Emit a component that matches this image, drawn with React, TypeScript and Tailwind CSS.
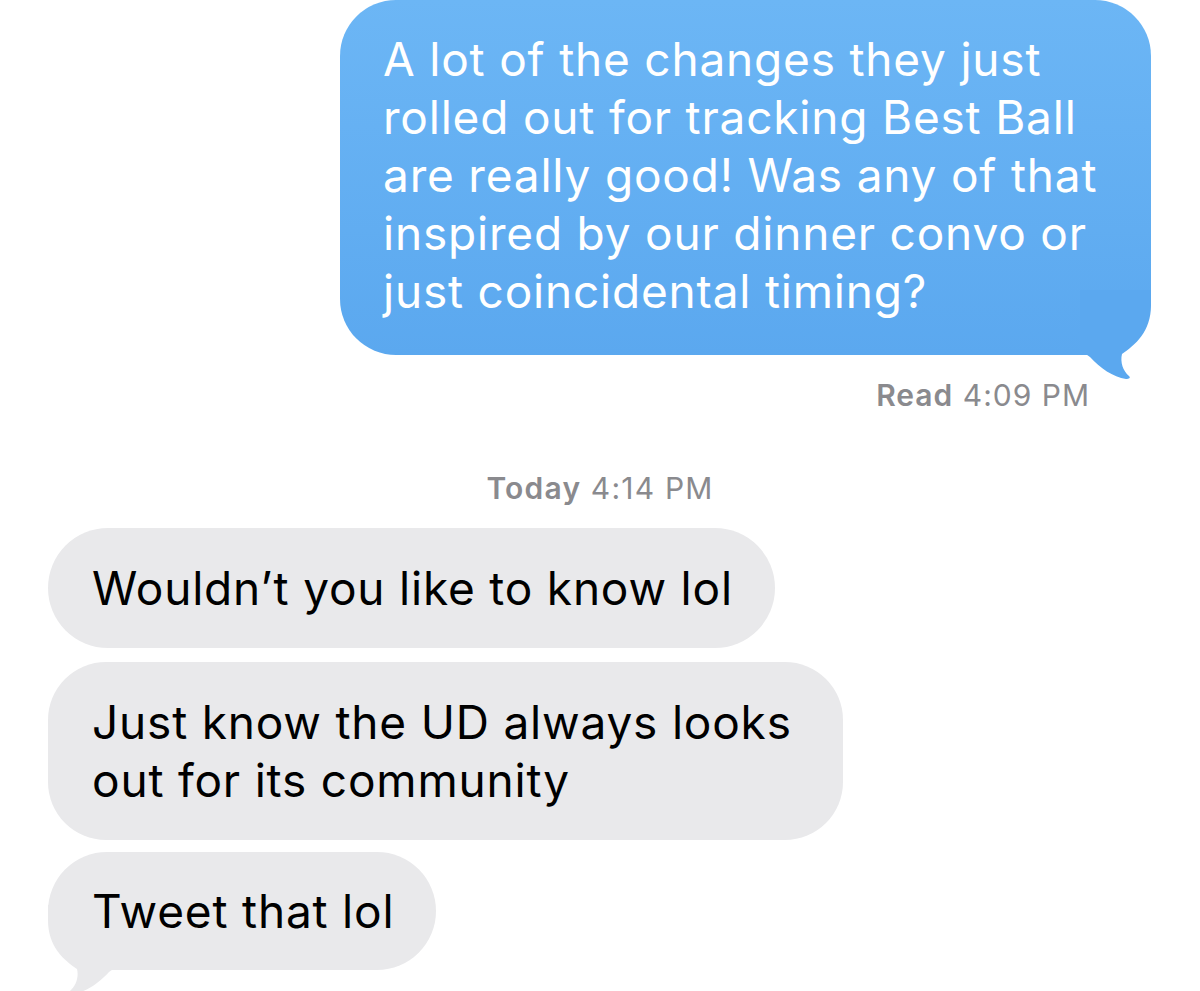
import React from "react";

const font = { fontFamily: '"Inter", "Liberation Sans", sans-serif' };

function BlueTail() {
  return (
    <svg
      className="absolute right-[-9px] bottom-[-30px]"
      width="80"
      height="95"
      viewBox="0 0 80 95"
    >
      <path
        d="M0 0 H71 V15 C71 42 55 55 42 64 C40 72 43 81 49 86 C51 88 49 89 46 89 C33 87 20 78 10 67 L0 60 Z"
        fill="#5ba8ef"
      />
    </svg>
  );
}

function GrayTail() {
  return (
    <svg
      className="absolute left-[-9px] bottom-[-30px] -scale-x-100"
      width="80"
      height="95"
      viewBox="0 0 80 95"
    >
      <path
        d="M0 0 H71 V15 C71 42 55 55 42 64 C40 72 43 81 49 86 C51 88 49 89 46 89 C33 87 20 78 10 67 L0 60 Z"
        fill="#e9e9eb"
      />
    </svg>
  );
}

export default function App() {
  return (
    <div
      className="w-[1200px] h-[991px] overflow-hidden bg-white flex flex-col"
      style={font}
    >
      <div className="flex justify-end pr-[49px]">
        <div className="relative w-[811px] h-[355px] rounded-[56px] bg-gradient-to-b from-[#6cb6f5] to-[#5ba8ef] pl-[43px] pr-[10px] pt-[30px] text-white text-[46px] leading-[58px] tracking-[0.8px]">
          <BlueTail />
          <div className="relative whitespace-nowrap">
            A lot of the changes they just
            <br />
            rolled out for tracking Best Ball
            <br />
            are really good! Was any of that
            <br />
            inspired by our dinner convo or
            <br />
            just coincidental timing?
          </div>
        </div>
      </div>

      <div className="mt-[22px] pr-[110px] text-right text-[30px] leading-[36px] tracking-[1px] text-[#8a8a8e]">
        <span className="font-semibold">Read</span> 4:09 PM
      </div>

      <div className="mt-[57px] text-center text-[30px] leading-[36px] tracking-[1.2px] text-[#8a8a8e]">
        <span className="font-semibold">Today</span> 4:14 PM
      </div>

      <div className="mt-[22px] ml-[48px] flex flex-col items-start">
        <div className="rounded-[60px] bg-[#e9e9eb] pl-[44px] pr-[42px] pt-[31px] pb-[31px] text-black text-[46px] leading-[58px] tracking-[0.8px] whitespace-nowrap">
          Wouldn’t you like to know lol
        </div>
        <div className="mt-[14px] rounded-[58px] bg-[#e9e9eb] pl-[44px] pr-[51px] py-[31px] text-black text-[46px] leading-[58px] tracking-[0.8px] whitespace-nowrap">
          Just know the UD always looks
          <br />
          out for its community
        </div>
        <div className="mt-[12px] relative rounded-[60px] bg-[#e9e9eb] pl-[44px] pr-[42px] py-[30px] text-black text-[46px] leading-[58px] tracking-[0.8px] whitespace-nowrap">
          <GrayTail />
          <span className="relative">Tweet that lol</span>
        </div>
      </div>
    </div>
  );
}
